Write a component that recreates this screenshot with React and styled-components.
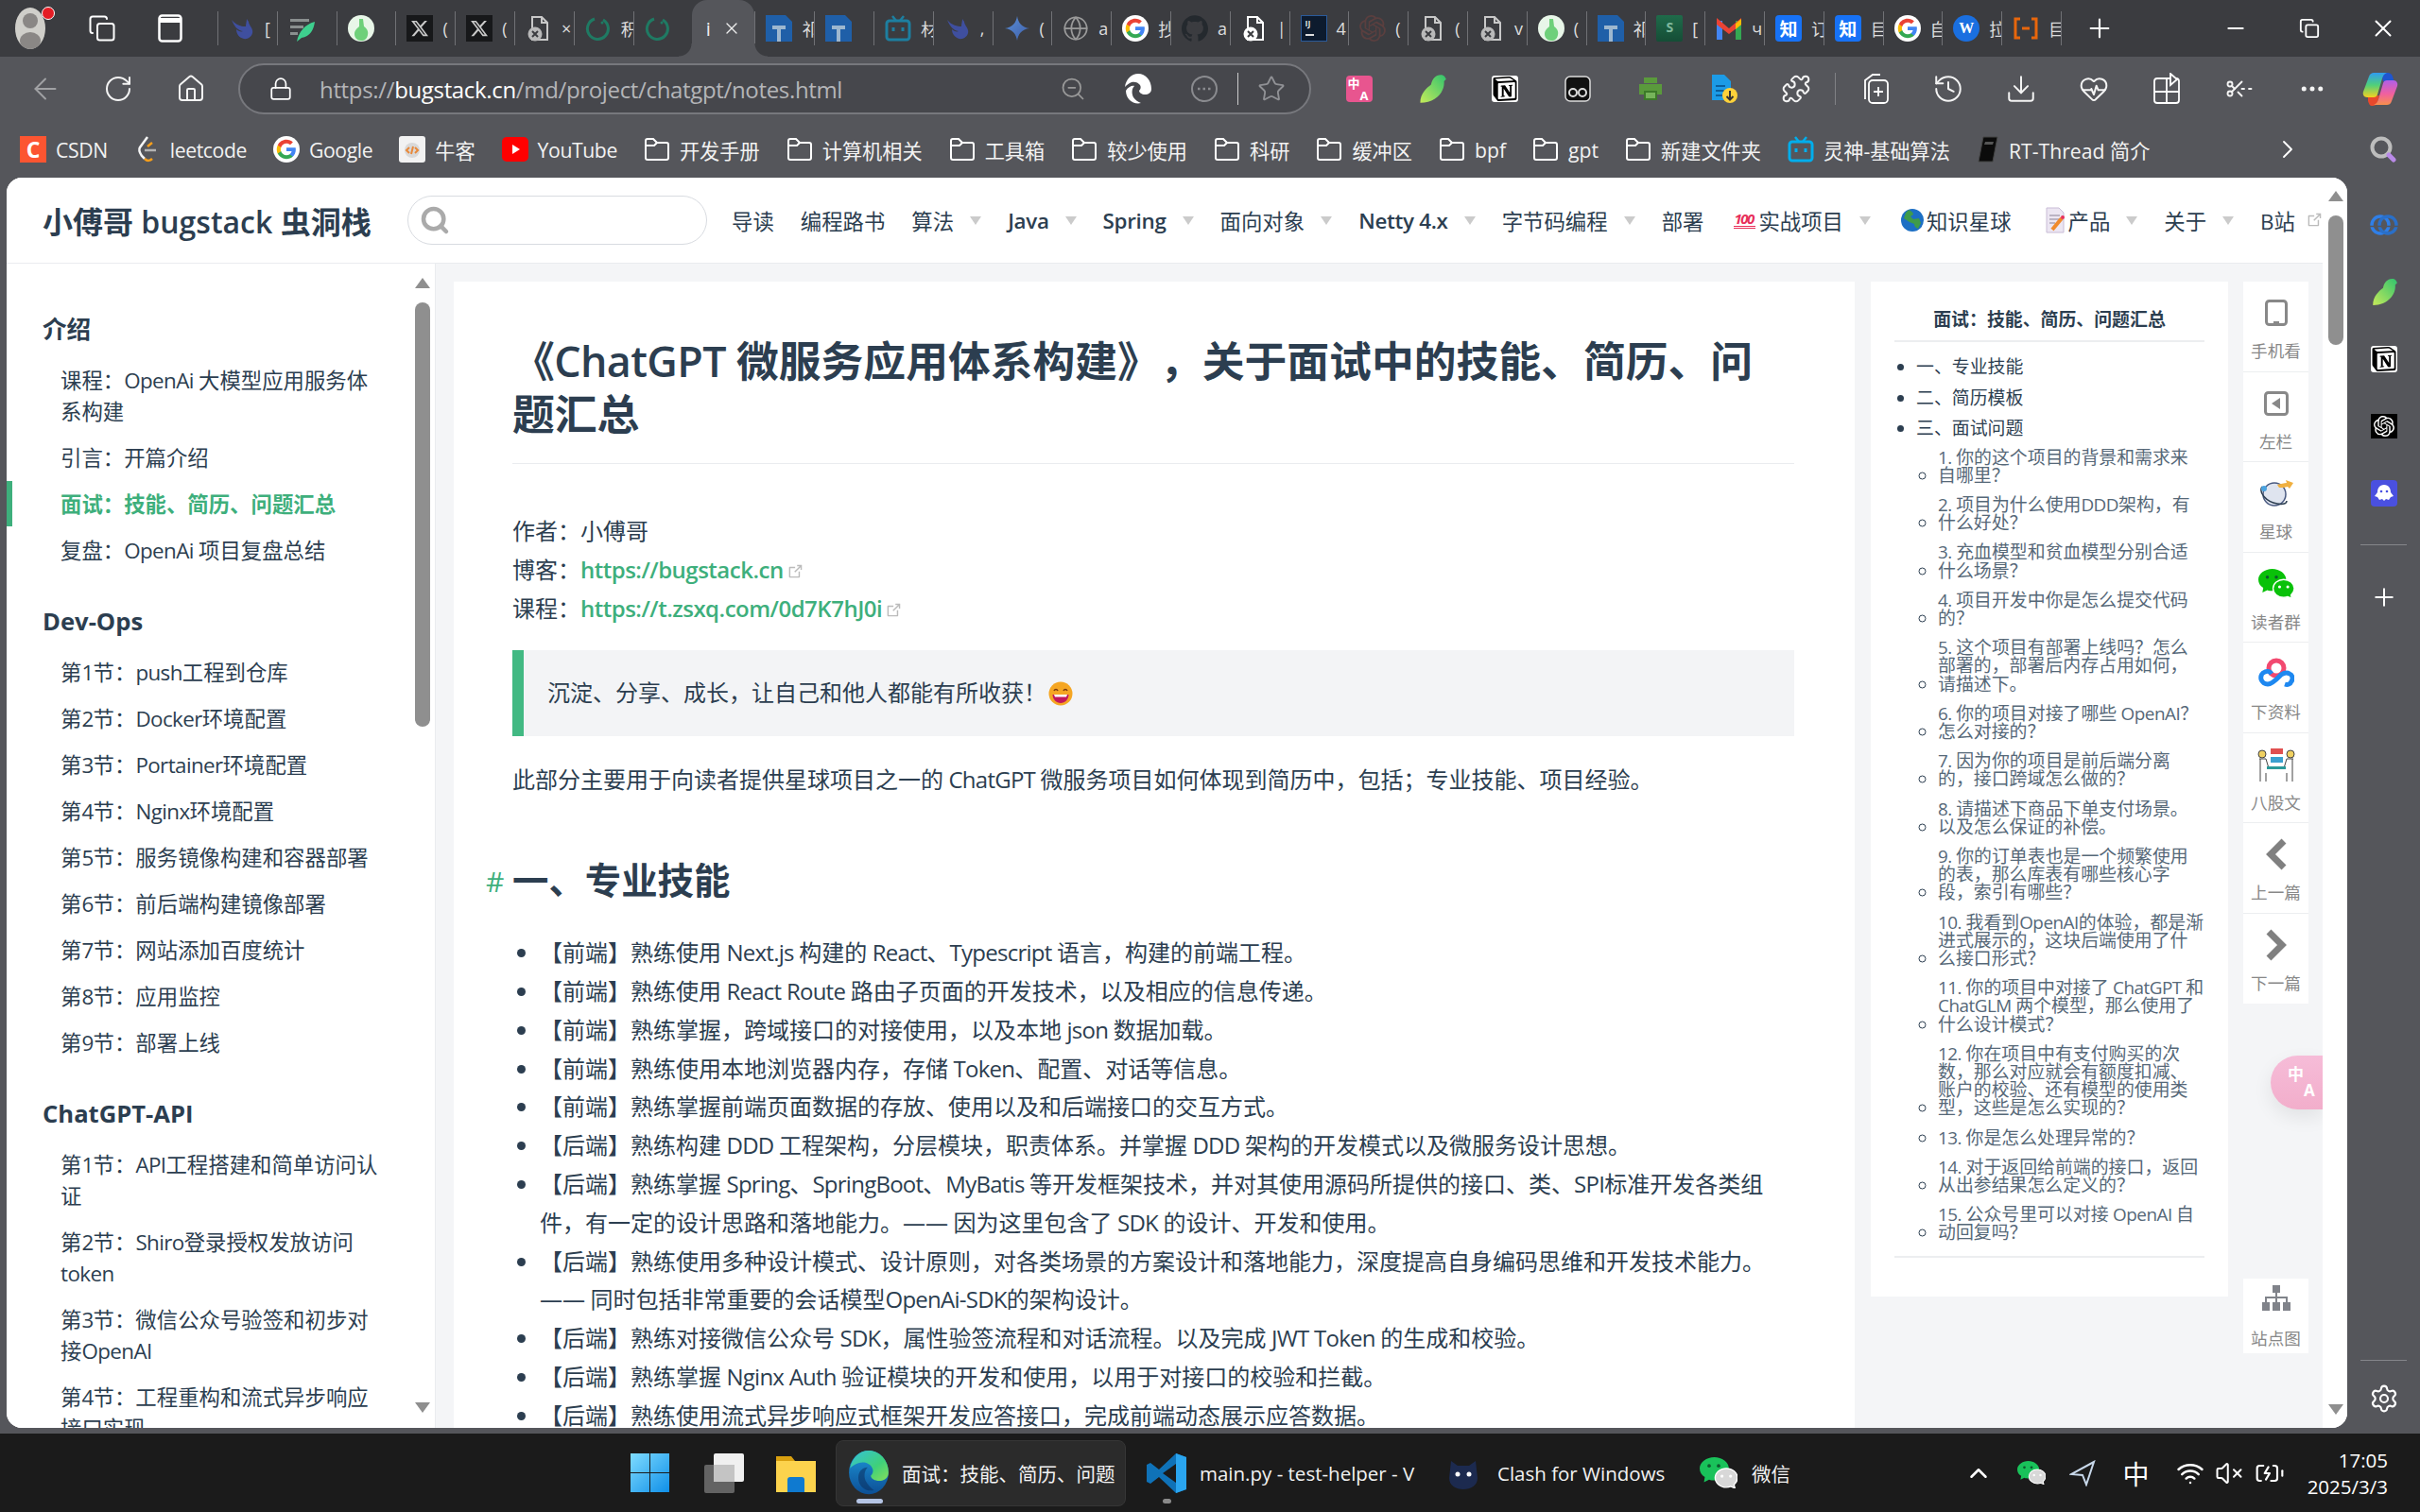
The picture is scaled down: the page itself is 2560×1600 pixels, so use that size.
import React from 'react';
import styled, { createGlobalStyle } from 'styled-components';
import { ArrowLeft, RotateCw, Home, Lock, ZoomOut, Star, Puzzle, History, Download, MoreHorizontal, Plus, Minus, X, Search, Settings, ChevronUp, ChevronRight, Wifi, VolumeX, BatteryCharging, Copy, Globe, ScissorsLineDashed, HeartPulse } from 'lucide-react';
import { SiNotion, SiOpenai, SiGithub } from 'react-icons/si';
import { FaXTwitter } from 'react-icons/fa6';

const sans = `"Open Sans","Noto Sans CJK SC",sans-serif`;
const ink = '#2c3e50';
const green = '#3eaf7c';

/* Chinese copy uses full-width punctuation throughout. */
const fw = s => s
  .replace(/:/g, '\uFF1A')
  .replace(/,/g, '\uFF0C')
  .replace(/;/g, '\uFF1B')
  .replace(/\?/g, '\uFF1F')
  .replace(/!/g, '\uFF01');

const Global = createGlobalStyle`
  html, body { margin: 0; width: 2560px; height: 1600px; overflow: hidden; background: #55565b; }
  body { font-family: ${sans}; color: ${ink}; text-spacing-trim: space-all; }
  * { box-sizing: border-box; }
`;

/* Latin runs inside Chinese copy are set a little tighter. */
const Lat = styled.span`letter-spacing: ${p => p.$ls}px;`;
const Mixed = ({ text, ls = -.75 }) => fw(text).split(/([A-Za-z0-9 .\-]+)/).map((part, i) => (
  i % 2 ? <Lat key={i} $ls={ls}>{part}</Lat> : part
));

const Ic = styled.svg`flex: none; display: block;`;

/* ---------- brand drawings ---------- */
const GoogleG = ({ s = 28 }) => (
  <Ic width={s} height={s} viewBox="0 0 24 24">
    <circle cx="12" cy="12" r="12" fill="#fff" />
    <g transform="translate(2.4 2.4) scale(.8)">
      <path fill="#4285F4" d="M22.56 12.25c0-.78-.07-1.53-.2-2.25H12v4.26h5.92c-.26 1.37-1.04 2.53-2.21 3.31v2.77h3.57c2.08-1.92 3.28-4.74 3.28-8.09z" />
      <path fill="#34A853" d="M12 23c2.97 0 5.46-.98 7.28-2.66l-3.57-2.77c-.98.66-2.23 1.06-3.71 1.06-2.86 0-5.29-1.93-6.16-4.53H2.18v2.84C3.99 20.53 7.7 23 12 23z" />
      <path fill="#FBBC05" d="M5.84 14.09c-.22-.66-.35-1.36-.35-2.09s.13-1.43.35-2.09V7.07H2.18C1.43 8.55 1 10.22 1 12s.43 3.45 1.18 4.93l3.66-2.84z" />
      <path fill="#EA4335" d="M12 5.38c1.62 0 3.06.56 4.21 1.64l3.15-3.15C17.45 2.09 14.97 1 12 1 7.7 1 3.99 3.47 2.18 7.07l3.66 2.84c.87-2.6 3.3-4.53 6.16-4.53z" />
    </g>
  </Ic>
);
const Whale = () => (
  <Ic width="28" height="28" viewBox="0 0 28 28">
    <path fill="#3f4f9f" d="M3 5c3 7 6 11 12 12-2 1-5 0-7-2 0 6 5 11 11 10 4-1 7-5 6-9-1-4-4-6-4-9l-2-3c0 3-1 5-1 8C14 12 8 11 3 5z" />
  </Ic>
);
const Feather = () => (
  <Ic width="28" height="28" viewBox="0 0 28 28">
    <path fill="#8a8f8f" d="M2 4h20v3H2zM2 11h14v3H2zM2 18h8v3H2z" />
    <path fill="#3ecf8e" d="M9 28c2-10 8-18 19-21-1 8-5 16-14 17z" />
  </Ic>
);
const Bottle = ({ s = 28 }) => (
  <Ic width={s} height={s} viewBox="0 0 28 28">
    <circle cx="14" cy="14" r="14" fill="#e8f6e8" />
    <path fill="#6ed07a" d="M12 4h4l1 8c3 2 5 5 4 9-1 4-3 6-7 6s-7-3-7-7c0-4 3-6 5-8z" />
  </Ic>
);
const TileBlack = styled.span`width: 28px; height: 28px; background: #17181a; display: flex; align-items: center; justify-content: center; flex: none;`;
const XLogo = () => (
  <TileBlack><FaXTwitter size={20} color="#c9c9c9" /></TileBlack>
);
const DocX = () => (
  <Ic width="28" height="28" viewBox="0 0 28 28">
    <path fill="none" stroke="#c8c8c8" strokeWidth="2" d="M7 2h10l6 6v18H7z" />
    <path fill="none" stroke="#c8c8c8" strokeWidth="2" d="M17 2v6h6" />
    <circle cx="10" cy="20" r="7.500" fill="#b9b9b9" />
    <path stroke="#3b3c40" strokeWidth="2" d="M7 17l6 6M13 17l-6 6" />
  </Ic>
);
const DocXW = () => (
  <Ic width="28" height="28" viewBox="0 0 28 28">
    <path fill="none" stroke="#fff" strokeWidth="2" d="M7 2h10l6 6v18H7z" />
    <path fill="none" stroke="#fff" strokeWidth="2" d="M17 2v6h6" />
    <circle cx="10" cy="20" r="7.500" fill="#fff" />
    <path stroke="#3b3c40" strokeWidth="2" d="M7 17l6 6M13 17l-6 6" />
  </Ic>
);
const Loader = () => (
  <Ic width="28" height="28" viewBox="0 0 28 28">
    <path fill="none" stroke="#1f7a63" strokeWidth="3" d="M10 4a11 11 0 1 0 9 1" />
    <circle cx="18" cy="8" r="1.500" fill="#1f7a63" />
  </Ic>
);
const TDoc = () => (
  <Ic width="28" height="28" viewBox="0 0 28 28">
    <path fill="#1f5fa8" d="M0 0h21l7 7v21H0z" />
    <path fill="#9db7cf" d="M7 11h14v4h-5v13h-4V15H7z" />
  </Ic>
);
const TV = ({ c = '#1d7fa0' }) => (
  <Ic width="28" height="28" viewBox="0 0 28 28">
    <path stroke={c} strokeWidth="2.500" d="M8 1l4 5M20 1l-4 5" />
    <rect x="2" y="6" width="24" height="20" rx="3" fill="none" stroke={c} strokeWidth="3" />
    <path stroke={c} strokeWidth="3" d="M9 13v4M19 13v4" />
  </Ic>
);
const Spark = () => (
  <Ic width="28" height="28" viewBox="0 0 28 28">
    <defs><linearGradient id="sp" x1="0" y1="0" x2="1" y2="1"><stop stopColor="#5a8fd8" /><stop offset="1" stopColor="#3f5fa8" /></linearGradient></defs>
    <path fill="url(#sp)" d="M14 1c1 7 5 12 13 13-8 1-12 6-13 13-1-7-5-12-13-13 8-1 12-6 13-13z" />
  </Ic>
);
const IJTile = styled.span`
  width: 28px; height: 28px; background: #0d1b2e; border: 1px solid #2a5a9a; color: #ddd; font: 700 9px ${sans};
  padding: 3px 0 0 4px; flex: none; display: block; line-height: 10px;
  i { display: block; width: 9px; height: 2px; background: #ddd; margin-top: 6px; }
`;
const IJ = () => (
  <IJTile>IJ<i /></IJTile>
);
const OAIdark = () => <SiOpenai size={28} color="#5a3f3f" />;
const SheetTile = styled.span`
  width: 28px; height: 28px; background: linear-gradient(#1f6b4a, #154d36); color: #7fb89c; font: 700 14px/26px ${sans}; text-align: center; flex: none; border-radius: 2px;
`;
const SDoc = () => (
  <SheetTile>S</SheetTile>
);
const Gmail = () => (
  <Ic width="28" height="28" viewBox="0 0 28 28">
    <path fill="#4285F4" d="M1 6h6v20H1z" /><path fill="#34A853" d="M21 6h6v20h-6z" />
    <path fill="#EA4335" d="M1 3l13 11L27 3v7L14 20 1 10z" />
    <path fill="#FBBC05" d="M21 9l6-5v6l-6 5z" />
  </Ic>
);
const ZhiTile = styled.span`
  width: 28px; height: 28px; background: #1772f6; color: #fff; font: 700 19px/27px "Noto Sans CJK SC", sans-serif; text-align: center; border-radius: 4px; flex: none; overflow: hidden;
`;
const WTile = styled.span`
  width: 28px; height: 28px; background: #1a6fe0; color: #fff; font: 700 16px/28px "Liberation Serif", serif; text-align: center; border-radius: 50%; flex: none;
`;
const Bracket = () => (
  <Ic width="28" height="28" viewBox="0 0 28 28">
    <path fill="none" stroke="#e8660c" strokeWidth="3" d="M8 4H3v20h5M20 4h5v20h-5M10 14h8" />
  </Ic>
);
const AvatarBox = styled.span`position: relative; display: block; width: 44px; height: 46px; flex: none;`;
const RedDot = styled.i`position: absolute; right: 0; top: 0; width: 14px; height: 14px; border-radius: 50%; background: #e41c24; border: 1px solid #fff;`;
const Avatar = () => (
  <AvatarBox>
    <Ic width="36" height="46" viewBox="0 0 36 46">
      <ellipse cx="18" cy="23" rx="16" ry="22" fill="#d0cfca" />
      <circle cx="18" cy="15" r="8" fill="#8a8785" />
      <ellipse cx="18" cy="36" rx="11" ry="9" fill="#8a8785" />
    </Ic>
    <RedDot />
  </AvatarBox>
);
const Bird = ({ s = 28 }) => (
  <Ic width={s} height={s} viewBox="0 0 28 28">
    <defs><linearGradient id="bd" x1="0" y1="1" x2="1" y2="0"><stop stopColor="#c6ea5a" /><stop offset="1" stopColor="#2fc36e" /></linearGradient></defs>
    <path fill="url(#bd)" d="M3 27C3 18 9 13 13 10 14 5 17 1 22 1c3 0 4 2 5 4l-2 2c1 9-7 20-22 20z" />
  </Ic>
);
const NotionTile = styled.span`
  width: 28px; height: 28px; background: #fff; color: #000; display: flex; align-items: center; justify-content: center; flex: none; border-radius: 3px;
`;
const TransTile = styled.span`
  width: ${p => p.$s || 28}px; height: ${p => p.$s || 28}px; background: ${p => p.$bare ? 'transparent' : '#e8558f'}; border-radius: 4px; color: #fff; font: 700 ${p => p.$f || 13}px/1 ${sans}; flex: none;
  display: grid; grid-template: 1fr 1fr / 1fr 1fr; padding: 2px;
  span:first-child { grid-area: 1 / 1; } span:last-child { grid-area: 2 / 2; }
`;
const Tape = () => (
  <Ic width="28" height="28" viewBox="0 0 28 28">
    <rect x="1" y="1" width="26" height="26" rx="5" fill="#111" stroke="#ddd" strokeWidth="1.500" />
    <circle cx="9" cy="18" r="4" fill="none" stroke="#ddd" strokeWidth="2" />
    <circle cx="19" cy="18" r="4" fill="none" stroke="#ddd" strokeWidth="2" />
  </Ic>
);
const Printer = () => (
  <Ic width="28" height="28" viewBox="0 0 28 28">
    <path fill="#5a9a3c" d="M7 2h14v6H7zM2 9h24v11H2z" />
    <path fill="#3c7a28" d="M7 16h14v10H7z" /><path fill="#76b45a" d="M9 18h10v6H9z" />
  </Ic>
);
const DocDl = () => (
  <Ic width="32" height="32" viewBox="0 0 32 32">
    <path fill="#1c9be6" d="M4 1h13l7 7v20H4z" />
    <path stroke="#0a5f9e" strokeWidth="2" d="M8 13h10M8 18h10M8 23h7" />
    <circle cx="23" cy="23" r="8" fill="#fdd23a" />
    <path stroke="#333" strokeWidth="2" fill="none" d="M23 18v9M19.500 24l3.500 3.500 3.500-3.500" />
  </Ic>
);
const Copilot = () => (
  <Ic width="38" height="36" viewBox="0 0 38 36">
    <defs>
      <linearGradient id="c2" x1="0" y1="0" x2="0" y2="1"><stop stopColor="#2f9cf0" /><stop offset=".5" stopColor="#4fd07a" /><stop offset="1" stopColor="#f4d020" /></linearGradient>
      <linearGradient id="c3" x1="0" y1="0" x2="0" y2="1"><stop stopColor="#b05fe8" /><stop offset=".55" stopColor="#f0609f" /><stop offset="1" stopColor="#f8904c" /></linearGradient>
    </defs>
    <path fill="#1f55d0" d="M20 1h7c2 0 4 1 5 4l2 6-12-1z" />
    <path fill="#e8482c" d="M6 26l12-1-2 7c-1 3-3 4-5 4H10c-2 0-3-2-4-5z" />
    <path fill="url(#c2)" d="M12 1h14c-3 1-4 3-5 6l-5 17c-.5 2-2 3-4 3H5c-3 0-5-3-4-6L7 5c1-3 3-4 5-4z" />
    <path fill="url(#c3)" d="M26 35H12c3-1 4-3 5-6l5-17c.5-2 2-3 4-3h7c3 0 5 3 4 6l-6 16c-1 3-3 4-5 4z" />
  </Ic>
);
const GhostTile = styled.span`width: 28px; height: 28px; background: #4a50e0; border-radius: 4px; display: flex; align-items: center; justify-content: center;`;
const Ghost = () => (
  <GhostTile>
    <Ic width="22" height="22" viewBox="0 0 22 22">
      <path fill="#fff" d="M11 2c5 0 7 4 7 8l3 4-3 1-2 3-3-1-2 2-2-2-3 1-2-3-3-1 3-4c0-4 2-8 7-8z" />
      <circle cx="8" cy="9" r="1.300" fill="#4a50e0" /><circle cx="14" cy="9" r="1.300" fill="#4a50e0" />
    </Ic>
  </GhostTile>
);
const OpenTile = styled.span`width: 28px; height: 26px; background: #000; display: flex; align-items: center; justify-content: center;`;
const RailRings = () => (
  <Ic width="30" height="24" viewBox="0 0 30 24" fill="none" strokeWidth="3.500">
    <circle cx="11" cy="12" r="9" stroke="#2f7fe8" />
    <circle cx="19" cy="12" r="9" stroke="#2a6fc8" />
    <path stroke="#55565b" strokeWidth="1.500" d="M0 13.500h30" />
  </Ic>
);
const RailSearch = () => (
  <Ic width="28" height="28" viewBox="0 0 28 28" fill="none">
    <circle cx="12" cy="12" r="9.500" stroke="#bdbdbd" strokeWidth="4" />
    <path stroke="#b98ae8" strokeWidth="5" strokeLinecap="round" d="M20 20l5 5" />
  </Ic>
);

const Edge = ({ s = 44 }) => (
  <Ic width={s} height={s * 1.1} viewBox="0 0 40 44">
    <defs>
      <linearGradient id="e1" x1="0" y1="0" x2="1" y2="1"><stop stopColor="#35c1d8" /><stop offset=".6" stopColor="#3fd07a" /><stop offset="1" stopColor="#86e05a" /></linearGradient>
      <linearGradient id="e2" x1="0" y1="0" x2="0" y2="1"><stop stopColor="#1e96d8" /><stop offset="1" stopColor="#0c4f96" /></linearGradient>
    </defs>
    <ellipse cx="20" cy="22" rx="19" ry="21" fill="url(#e2)" />
    <path fill="url(#e1)" d="M2 18C4 8 11 1 20 1c10 0 19 9 19 21 0 5-4 8-9 8-4 0-8-2-8-5 2-2 3-5 1-8-2-4-8-6-13-4-3 1-6 3-8 5z" />
    <path fill="#0b2f5e" d="M25 39c-7 2-15-3-15-12 0-6 4-10 9-10-3 3-4 8-2 13 2 4 5 7 8 9z" opacity=".55" />
  </Ic>
);
const EdgeMono = () => (
  <Ic width="30" height="34" viewBox="0 0 30 34">
    <path fill="#fff" d="M1 15C2 7 8 1 15 1c8 0 14 7 14 16 0 4-3 6-7 6-3 0-6-2-6-4 2-2 2-4 1-6-2-3-6-4-9-3-3 1-5 3-7 5z" />
    <path fill="#fff" d="M18 32C10 34 2 28 2 19c2-4 7-6 9-5-3 3-3 8-1 12 2 3 5 5 8 6z" />
  </Ic>
);
const WinLogo = () => (
  <Ic width="41" height="41" viewBox="0 0 41 41">
    <defs><linearGradient id="w" x1="0" y1="0" x2="1" y2="1"><stop stopColor="#7fdcff" /><stop offset="1" stopColor="#0f8fe8" /></linearGradient></defs>
    <path fill="url(#w)" d="M0 0h20v20H0zM21 0h20v20H21zM0 21h20v20H0zM21 21h20v20H21z" />
  </Ic>
);
const TaskView = () => (
  <Ic width="42" height="42" viewBox="0 0 42 42">
    <rect x="10" y="0" width="32" height="30" rx="2" fill="#f0f0f0" />
    <rect x="0" y="12" width="32" height="30" rx="2" fill="#6b6b6b" opacity=".9" />
    <rect x="10" y="12" width="22" height="18" fill="#c4c4c4" />
  </Ic>
);
const Explorer = () => (
  <Ic width="42" height="40" viewBox="0 0 42 40">
    <path fill="#d9a00f" d="M0 2h16l4 5h22v8H0z" />
    <path fill="#fcd34d" d="M0 7h42v33H0z" />
    <path fill="#0f7ad0" d="M15 24h12c2 0 3 1 3 3v13H12V27c0-2 1-3 3-3z" />
  </Ic>
);
const VSCode = () => (
  <Ic width="44" height="44" viewBox="0 0 44 44">
    <path fill="#0f72b8" d="M32 1 14 18 5 11 1 13v18l4 2 9-7 18 17 11-4V5zM32 12v20L18 22z" fillRule="evenodd" />
    <path fill="#2aa5ef" d="M32 1l11 4v34l-11 4z" />
  </Ic>
);
const Clash = () => (
  <Ic width="38" height="38" viewBox="0 0 38 38">
    <path fill="#1c2a4f" d="M6 6l7 5h12l7-5 2 18c0 8-7 12-15 12S4 32 4 24z" />
    <circle cx="13" cy="20" r="2.500" fill="#fff" /><circle cx="25" cy="20" r="2.500" fill="#fff" />
  </Ic>
);
const WeChat = ({ w = 44, a = '#19c25a', b = '#19c25a' }) => (
  <Ic width={w} height={w * .82} viewBox="0 0 44 36">
    <path fill={a} d="M17 0c9 0 17 6 17 13s-8 14-17 14c-2 0-4 0-6-1l-6 3 1-6C2 21 0 17 0 13 0 6 8 0 17 0z" />
    <path fill={b} stroke="#fff" strokeWidth="1.500" d="M31 13c7 0 13 5 13 11 0 3-2 6-4 8l1 4-5-2c-2 1-3 1-5 1-7 0-13-5-13-11s6-11 13-11z" />
    <circle cx="11" cy="10" r="2" fill="#0d5a2e" /><circle cx="22" cy="10" r="2" fill="#0d5a2e" />
    <circle cx="26" cy="22" r="1.800" fill="#fff" /><circle cx="36" cy="22" r="1.800" fill="#fff" />
  </Ic>
);
const BaiduCloud = () => (
  <Ic width="38" height="34" viewBox="0 0 38 34">
    <circle cx="19" cy="11" r="8" fill="none" stroke="#f2496f" strokeWidth="5" />
    <path fill="none" stroke="#1e88f0" strokeWidth="5" d="M14 17c-2-3-5-3-7-2-3 1-5 4-4 8 1 3 4 5 7 5 5 0 10-6 14-10 3-2 6-3 9-1 3 1 4 5 2 8-1 3-4 4-7 3" />
  </Ic>
);
const Planet = () => (
  <Ic width="38" height="34" viewBox="0 0 38 34">
    <circle cx="17" cy="18" r="12" fill="#dfe4ef" stroke="#4a5a80" strokeWidth="1.500" />
    <path fill="none" stroke="#2c3e50" strokeWidth="1.500" d="M4 10C0 16 8 26 20 28c6 1 10 0 10-3" />
    <circle cx="6" cy="12" r="3" fill="#4aa3e0" />
    <path fill="#f0b040" d="M20 8c4-1 7-2 10-2l-1-3 8 3-4 6-2-2c-3 1-6 1-9 1z" />
  </Ic>
);
const Interview = () => (
  <Ic width="40" height="36" viewBox="0 0 40 36" fill="none" stroke="#444" strokeWidth="1">
    <rect x="14" y="1" width="13" height="6" fill="#e05050" stroke="none" />
    <rect x="14" y="10" width="13" height="6" fill="#3aa0d0" stroke="none" />
    <circle cx="5" cy="7" r="4" fill="#f0d060" /><circle cx="35" cy="7" r="4" fill="#f0d060" />
    <path d="M2 12h7l3 10h5M38 12h-7l-3 10h-5M3 12v24M37 12v24M9 27v9M31 27v9" />
    <rect x="10" y="20" width="20" height="3" fill="#2a9a9a" stroke="none" />
  </Ic>
);
const Tablet = () => (
  <Ic width="24" height="28" viewBox="0 0 24 28">
    <rect x="1.500" y="1.500" width="21" height="25" rx="3" fill="#fff" stroke="#888" strokeWidth="3" />
    <rect x="9" y="23" width="6" height="2" fill="#888" />
  </Ic>
);
const LeftBar = () => (
  <Ic width="26" height="26" viewBox="0 0 26 26">
    <rect x="1.500" y="1.500" width="23" height="23" rx="3" fill="#fff" stroke="#888" strokeWidth="3" />
    <path fill="#888" d="M17 7v12L8 13z" />
  </Ic>
);
const Thick = ({ left }) => (
  <Ic width="24" height="34" viewBox="0 0 24 34">
    <path fill="none" stroke="#808080" strokeWidth="7" d={left ? 'M20 3 6 17l14 14' : 'M4 3l14 14L4 31'} />
  </Ic>
);
const SiteMap = () => (
  <Ic width="30" height="28" viewBox="0 0 30 28">
    <path fill="#80838a" d="M11 0h8v8h-8zM0 18h8v9H0zM11 18h8v9h-8zM22 18h8v9h-8z" />
    <path fill="none" stroke="#80838a" strokeWidth="2" d="M15 8v10M4 18v-5h22v5" />
  </Ic>
);
const EmojiSvg = styled.svg`display: inline-block; vertical-align: -5px; margin-left: 2px;`;
const Smile = () => (
  <EmojiSvg width="26" height="26" viewBox="0 0 26 26">
    <circle cx="13" cy="13" r="12.500" fill="#f5a623" />
    <path fill="none" stroke="#7a3b10" strokeWidth="1.600" d="M6 10c1-2 3-2 4 0M16 10c1-2 3-2 4 0" />
    <path fill="#c2185b" d="M4.500 14h17c0 5-4 9-8.500 9s-8.500-4-8.500-9z" />
    <path fill="#fff" d="M6 14h14l-1 2.500H7z" />
  </EmojiSvg>
);
const OutSvg = styled.svg`display: inline-block; margin-left: ${p => p.$ml || 3}px; vertical-align: -2px; flex: none;`;
const Outbound = ({ s = 18, ml = 3 }) => (
  <OutSvg $ml={ml} width={s} height={s} viewBox="0 0 100 100">
    <path fill="#bbb" d="M18.800 85.100h56c2.200 0 4-1.800 4-4v-32h-8v28h-48v-48h28v-8h-32c-2.200 0-4 1.800-4 4v56c0 2.200 1.800 4 4 4z" />
    <path fill="#bbb" d="M45.700 48.700l5.700 5.700 31-31v15h8V10h-28v8h14.300z" />
  </OutSvg>
);

/* ---------- tab strip ---------- */
const Strip = styled.div`height: 60px; background: #3b3c40; display: flex; align-items: center; color: #ddd; flex: none;`;
const Lead = styled.span`width: 72px; height: 60px; display: flex; align-items: center; justify-content: center; flex: none; color: #fff;`;
const Tab = styled.div`
  width: 62.8px; height: 36px; border-left: 1px solid #707175; padding-left: 11px; display: flex; align-items: center; gap: 10px;
  overflow: hidden; font-size: 18px; color: #ddd; flex: none; white-space: nowrap;
`;
const ActiveTab = styled.div`
  width: 66px; height: 60px; background: #55565b; border-radius: 16px 16px 0 0; display: flex; align-items: center; justify-content: center; gap: 12px;
  color: #eee; font-size: 20px; flex: none; position: relative;
  &:before, &:after { content: ""; position: absolute; bottom: 0; width: 14px; height: 14px; }
  &:before { left: -14px; background: radial-gradient(circle at 0 0, #3b3c40 13px, #55565b 14px); }
  &:after { right: -14px; background: radial-gradient(circle at 100% 0, #3b3c40 13px, #55565b 14px); }
`;
const WinCtl = styled.span`display: flex; align-items: center; justify-content: center; width: 78px; height: 60px; flex: none; color: #fff;`;
const Spacer = styled.span`width: ${p => p.$w}px; flex: none;`;
const TabEnd = styled.span`height: 36px; border-left: 1px solid #707175; margin-right: 24px; flex: none;`;
const WinSpace = styled.span`flex: 1;`;

const tabsA = [[<Whale />, '['], [<Feather />, ''], [<Bottle />, ''], [<XLogo />, '('], [<XLogo />, '('], [<DocX />, '×'], [<Loader />, '积'], [<Loader />, '']];
const tabsB = [[<TDoc />, '祁'], [<TDoc />, ''], [<TV />, '材'], [<Whale />, ','], [<Spark />, '('], [<Globe size={28} color="#9a9a9a" strokeWidth={1.5} />, 'a'], [<GoogleG />, '抄'], [<SiGithub size={28} color="#24292e" />, 'a'],
  [<DocXW />, '|'], [<IJ />, '4'], [<OAIdark />, '('], [<DocX />, '('], [<DocX />, 'v'], [<Bottle />, '('], [<TDoc />, '祁'], [<SDoc />, '['], [<Gmail />, 'ч'], [<ZhiTile>知</ZhiTile>, '订'], [<ZhiTile>知</ZhiTile>, '目'], [<GoogleG />, '自'], [<WTile>W</WTile>, '拉'], [<Bracket />, '目']];

const TabIco = () => (
  <Ic width="26" height="30" viewBox="0 0 26 30"><rect x="1.500" y="1.500" width="23" height="27" rx="3" fill="none" stroke="#fff" strokeWidth="2.500" /><path fill="#fff" d="M1.500 4h23v5h-23z" /></Ic>
);

const TabStrip = () => (
  <Strip>
    <Lead><Avatar /></Lead>
    <Lead><Copy size={30} strokeWidth={1.6} /></Lead>
    <Lead><TabIco /></Lead>
    <Spacer $w={14} />
    {tabsA.map(([i, t], k) => <Tab key={k}>{i}<span>{t}</span></Tab>)}
    <ActiveTab><span>i</span><X size={20} strokeWidth={1.6} /></ActiveTab>
    {tabsB.map(([i, t], k) => <Tab key={k}>{i}<span>{t}</span></Tab>)}
    <TabEnd />
    <Plus size={32} color="#fff" strokeWidth={1.6} />
    <WinSpace />
    <WinCtl><Minus size={26} strokeWidth={2} /></WinCtl>
    <WinCtl><Copy size={22} strokeWidth={2} /></WinCtl>
    <WinCtl><X size={30} strokeWidth={1.6} /></WinCtl>
  </Strip>
);

/* ---------- toolbar ---------- */
const Bar = styled.div`height: 68px; background: #55565b; display: flex; align-items: center; padding-left: 9px; color: #fff; flex: none;`;
const Slot = styled.span`width: ${p => p.$w || 77}px; display: flex; align-items: center; justify-content: center; flex: none; color: #f4f4f4;`;
const Omni = styled.div`
  width: 1135px; height: 54px; margin: 0 12px; border: 2px solid #77787d; border-radius: 27px; background: #46474c; display: flex; align-items: center; padding: 0 25px 0 30px; flex: none;
`;
const Url = styled.div`flex: 1; margin-left: 28px; font-size: 24px; color: #b4b5b8; letter-spacing: -.34px; white-space: nowrap; b { font-weight: 400; color: #fff; }`;
const OmniIcons = styled.div`display: flex; align-items: center; gap: 40px;`;
const VSep = styled.span`width: 1px; height: ${p => p.$h || 34}px; background: ${p => p.$c || '#ccc'}; flex: none; margin: 0 ${p => p.$m || 0}px;`;
const MoreCircle = () => (
  <Ic width="30" height="30" viewBox="0 0 30 30"><circle cx="15" cy="15" r="13" fill="none" stroke="#8a8b8f" strokeWidth="2" /><path stroke="#8a8b8f" strokeWidth="2.500" strokeDasharray="2.500 3" d="M8 15h14" /></Ic>
);
const TabPlus = () => (
  <Ic width="32" height="34" viewBox="0 0 32 34" fill="none" stroke="#fff" strokeWidth="1.800"><path d="M5 28V8l8-6h8" /><rect x="9" y="8" width="20" height="24" rx="4" /><path d="M19 15v10M14 20h10" /></Ic>
);
const SplitIco = () => (
  <Ic width="32" height="34" viewBox="0 0 32 34" fill="none" stroke="#fff" strokeWidth="1.800"><rect x="3" y="6" width="26" height="26" rx="3" /><path d="M16 6v26M3 20h26" /><path d="M20 1l7 6-7 6z" fill="#55565b" /></Ic>
);

const Toolbar = () => (
  <Bar>
    <Slot><ArrowLeft size={36} color="#a0a1a4" strokeWidth={1.3} /></Slot>
    <Slot><RotateCw size={32} strokeWidth={1.5} /></Slot>
    <Slot><Home size={32} strokeWidth={1.5} /></Slot>
    <Omni>
      <Lock size={26} color="#fff" strokeWidth={1.6} />
      <Url>https://<b>bugstack.cn</b>/md/project/chatgpt/notes.html</Url>
      <OmniIcons>
        <ZoomOut size={28} color="#999" strokeWidth={1.5} />
        <EdgeMono />
        <MoreCircle />
      </OmniIcons>
      <VSep $m={20} />
      <Star size={30} color="#909195" strokeWidth={1.5} />
    </Omni>
    <Slot><TransTile><span>中</span><span>A</span></TransTile></Slot>
    <Slot><Bird s={32} /></Slot>
    <Slot><NotionTile><SiNotion size={26} /></NotionTile></Slot>
    <Slot><Tape /></Slot>
    <Slot><Printer /></Slot>
    <Slot><DocDl /></Slot>
    <Slot><Puzzle size={32} strokeWidth={1.5} /></Slot>
    <VSep $c="#808185" $m={3} />
    <Slot><TabPlus /></Slot>
    <Slot><History size={34} strokeWidth={1.4} /></Slot>
    <Slot><Download size={34} strokeWidth={1.4} /></Slot>
    <Slot><HeartPulse size={32} strokeWidth={1.5} /></Slot>
    <Slot><SplitIco /></Slot>
    <Slot><ScissorsLineDashed size={30} strokeWidth={1.5} /></Slot>
    <Slot><MoreHorizontal size={30} strokeWidth={2} /></Slot>
    <Slot $w={67}><Copilot /></Slot>
  </Bar>
);

/* ---------- bookmarks ---------- */
const Marks = styled.div`height: 60px; background: #55565b; display: flex; align-items: center; padding-left: 21px; gap: 28px; color: #f2f2f2; font-size: 21.200px; flex: none; white-space: nowrap;`;
const Mark = styled.span`display: flex; align-items: center; gap: 10px; flex: none; letter-spacing: ${p => p.$tight ? '-.4px' : '0'};`;
const CsdnTile = styled.span`width: 28px; height: 28px; background: #fc5531; color: #fff; font: 700 23px/28px ${sans}; text-align: center;`;
const Leet = () => (
  <Ic width="28" height="28" viewBox="0 0 28 28" fill="none" strokeWidth="2.500"><path stroke="#f5f5f5" d="M14 1 6 12c-2 3 0 6 2 9l3 3" /><path stroke="#f89f1b" d="M11 24c3 3 6 2 8 0M19 7l-5 4" /><path stroke="#b3b3b3" d="M11 15h12" /></Ic>
);
const Nk = () => (
  <Ic width="28" height="28" viewBox="0 0 28 28"><rect width="28" height="28" rx="3" fill="#f2f2f2" /><circle cx="14" cy="15" r="8" fill="#d9d9d9" /><path stroke="#e8893a" strokeWidth="2" fill="none" d="M11 12l-3 3 3 3M17 12l3 3-3 3M15 11l-2 8" /></Ic>
);
const Yt = () => (
  <Ic width="28" height="28" viewBox="0 0 28 28"><rect y="1" width="28" height="26" rx="5" fill="#f00" /><path fill="#fff" d="M11 9l8 5-8 5z" /></Ic>
);
const Fold = () => (
  <Ic width="28" height="28" viewBox="0 0 28 28" fill="none" stroke="#fff" strokeWidth="2"><path d="M2 5c0-1 1-2 2-2h6l4 4h10c1 0 2 1 2 2v14c0 1-1 2-2 2H4c-1 0-2-1-2-2z" /><path d="M14 7l-3 3H2" /></Ic>
);
const RT = () => (
  <Ic width="24" height="28" viewBox="0 0 24 28"><path fill="#0b0b0b" stroke="#444" d="M7 1h15l-5 26H2z" /><path fill="#555" d="M9 6h9l-1 3H8z" /></Ic>
);
const MarkEnd = styled.span`margin-left: auto; padding-right: 25px; display: flex; align-items: center; gap: 71px; color: #fff;`;
const Bookmarks = () => (
  <Marks>
    <Mark $tight><CsdnTile>C</CsdnTile>CSDN</Mark>
    <Mark $tight><Leet />leetcode</Mark>
    <Mark $tight><GoogleG />Google</Mark>
    <Mark><Nk />牛客</Mark>
    <Mark $tight><Yt />YouTube</Mark>
    {['开发手册', '计算机相关', '工具箱', '较少使用', '科研', '缓冲区', 'bpf', 'gpt', '新建文件夹'].map(t => <Mark key={t}><Fold />{t}</Mark>)}
    <Mark><TV c="#00aeec" />灵神-基础算法</Mark>
    <Mark><RT />RT-Thread 简介</Mark>
    <MarkEnd><ChevronRight size={32} strokeWidth={1.4} /><RailSearch /></MarkEnd>
  </Marks>
);

/* ---------- page ---------- */
const Workspace = styled.div`flex: 1; display: flex; min-height: 0; background: #55565b; padding: 0 0 6px 7px;`;
const Page = styled.div`width: 2476px; background: #fff; border-radius: 16px; overflow: hidden; display: flex; flex: none;`;
const Site = styled.div`width: 2450px; display: flex; flex-direction: column; flex: none;`;
const Head = styled.header`height: 91px; border-bottom: 1px solid #eaecef; padding-left: 38px; display: flex; align-items: center; flex: none; background: #fff;`;
const Brand = styled.div`font-size: 32px; font-weight: 600; white-space: nowrap; width: 386px; flex: none;`;
const SearchBox = styled.div`width: 317px; height: 52px; border: 1.5px solid #d8dbe0; border-radius: 26px; display: flex; align-items: center; padding-left: 12px; flex: none; margin-right: 26px;`;
const Nav = styled.nav`display: flex; align-items: center; gap: 28px; font-size: 22.400px; white-space: nowrap;`;
const NavItem = styled.span`display: flex; align-items: center; flex: none; font-weight: ${p => p.$latin ? 600 : 400}; letter-spacing: ${p => p.$latin ? '-.3px' : '0'};`;
const Caret = styled.i`width: 0; height: 0; border-left: 6px solid transparent; border-right: 6px solid transparent; border-top: 9px solid #cbcbcb; margin-left: 17px;`;
const Hundred = styled.span`color: #e8305a; font: italic 700 15px/15px ${sans}; border-bottom: 3px double #e8305a; margin: 0 3px 0 4px; letter-spacing: -1.500px; width: 23px;`;
const EmSvg = styled.svg`margin: 0 ${p => p.$r || 3}px 0 ${p => p.$l || 4}px; flex: none;`;
const Earth = () => (
  <EmSvg width="24" height="24" viewBox="0 0 24 24">
    <circle cx="12" cy="12" r="12" fill="#1c6fc4" />
    <path fill="#3f9b4a" d="M8 1c3 1 5 3 5 5l-3 2 3 3 6-1 2 5-3 6c-3-1-4-3-4-5l-5-2-6-4 2-6z" />
  </EmSvg>
);
const Memo = () => (
  <EmSvg $l={8} $r={4} width="20" height="28" viewBox="0 0 20 28"><path fill="#ece6f2" stroke="#c8bcd6" d="M1 1h13l5 5v21H1z" /><path stroke="#8a8296" d="M4 9h11M4 13h11M4 17h6" /><path stroke="#f08a2c" strokeWidth="4" d="M7 24 17 12" /><circle cx="18" cy="11" r="2" fill="#e8305a" /></EmSvg>
);

const navs = [['导读'], ['编程路书'], ['算法', 1], ['Java', 1, 1], ['Spring', 1, 1], ['面向对象', 1], ['Netty 4.x', 1, 1], ['字节码编程', 1], ['部署']];

const Header = () => (
  <Head>
    <Brand>小傅哥 bugstack 虫洞栈</Brand>
    <SearchBox><Search size={32} color="#aaa" strokeWidth={3.4} /></SearchBox>
    <Nav>
      {navs.map(([t, c, l]) => <NavItem key={t} $latin={l}>{t}{c && <Caret />}</NavItem>)}
      <NavItem><Hundred>100</Hundred>实战项目<Caret /></NavItem>
      <NavItem><Earth />知识星球</NavItem>
      <NavItem><Memo />产品<Caret /></NavItem>
      <NavItem>关于<Caret /></NavItem>
      <NavItem>B站<Outbound ml={11} /></NavItem>
    </Nav>
  </Head>
);

const Body = styled.div`flex: 1; display: flex; min-height: 0;`;
const Aside = styled.aside`width: 454px; border-right: 1px solid #eaecef; display: flex; flex: none; overflow: hidden; background: #fff;`;
const AsideScroll = styled.div`flex: 1; padding: 52px 24px 0 38px; overflow: hidden;`;
const SecTitle = styled.h3`margin: 0 0 11px; font-size: 25.600px; line-height: 36px; font-weight: 700; & ~ & { margin-top: 33px; }`;
const SideItem = styled.div`
  position: relative; padding: 8px 0 8px 19px; font-size: 22.400px; line-height: 33px;
  color: ${p => p.$on ? green : ink}; font-weight: ${p => p.$on ? 700 : 400};
  ${p => p.$on && `&:before { content: ""; position: absolute; left: -38px; top: 0; bottom: 1px; width: 6px; background: ${green}; }`}
`;
const ScrollCol = styled.div`width: ${p => p.$w}px; flex: none; padding-left: ${p => p.$pl}px; background: #fff; display: flex; flex-direction: column; align-items: flex-start;`;
const ArrowUp = styled.i`width: 0; height: 0; border-left: 8px solid transparent; border-right: 8px solid transparent; border-bottom: 11px solid #8f8f8f; margin-top: ${p => p.$mt}px;`;
const ArrowDown = styled.i`width: 0; height: 0; border-left: 8px solid transparent; border-right: 8px solid transparent; border-top: 11px solid #8f8f8f; margin-top: auto; margin-bottom: ${p => p.$mb}px;`;
const Thumb = styled.i`width: 16px; height: ${p => p.$h}px; border-radius: 8px; background: #8f8f8f; margin-top: ${p => p.$mt}px; display: block;`;

const side = [
  ['介绍', ['课程:OpenAi 大模型应用服务体系构建', '引言:开篇介绍', '*面试:技能、简历、问题汇总', '复盘:OpenAi 项目复盘总结']],
  ['Dev-Ops', ['第1节:push工程到仓库', '第2节:Docker环境配置', '第3节:Portainer环境配置', '第4节:Nginx环境配置', '第5节:服务镜像构建和容器部署', '第6节:前后端构建镜像部署', '第7节:网站添加百度统计', '第8节:应用监控', '第9节:部署上线']],
  ['ChatGPT-API', ['第1节:API工程搭建和简单访问认证', '第2节:Shiro登录授权发放访问token', '第3节:微信公众号验签和初步对接OpenAI', '第4节:工程重构和流式异步响应接口实现']],
];
const Sidebar = () => (
  <Aside>
    <AsideScroll>
      {side.map(([t, items]) => (
        <React.Fragment key={t}>
          <SecTitle>{t}</SecTitle>
          {items.map(i => <SideItem key={i} $on={i[0] === '*'}><Mixed text={i.replace('*', '')} ls={-.6} /></SideItem>)}
        </React.Fragment>
      ))}
    </AsideScroll>
    <ScrollCol $w={27} $pl={6}>
      <ArrowUp $mt={15} />
      <Thumb $h={449} $mt={15} />
      <ArrowDown $mb={16} />
    </ScrollCol>
  </Aside>
);

const Main = styled.main`flex: 1; background: #f4f5f7; display: flex; padding: 19px 15px 0 19px; gap: 16px; position: relative; overflow: hidden; min-width: 0;`;
const Article = styled.article`width: 1482px; flex: none; background: #fff; padding: 0 64px 0 62px; font-size: 24px; line-height: 40.800px; margin-right: 1px;`;
const H1 = styled.h1`margin: 0; padding: 56px 0 24px; font-size: 44.800px; line-height: 56px; font-weight: 700; border-bottom: 1px solid #eaecef;`;
const Thin = styled.span`font-weight: 600; letter-spacing: -.6px;`;
const Meta = styled.p`margin: 51px 0 0;`;
const Lnk = styled.a`color: ${green}; font-weight: 600; letter-spacing: -.5px;`;
const Quote = styled.blockquote`margin: 24px 0 0; height: 91px; background: #f3f4f6; border-left: 12px solid #42b983; padding-left: 25px; display: flex; align-items: center; color: #2c3e50;`;
const Para = styled.p`margin: 26px 0 0;`;
const H2 = styled.h2`position: relative; margin: 59px 0 0; font-size: 38.400px; line-height: 52px; font-weight: 700;`;
const Hash = styled.span`position: absolute; left: -28px; top: 2px; color: ${green}; font-size: 30px; font-weight: 400;`;
const List = styled.ul`margin: 31px 0 0; padding-left: 29px;`;

const skills = [
  '【前端】熟练使用 Next.js 构建的 React、Typescript 语言,构建的前端工程。',
  '【前端】熟练使用 React Route 路由子页面的开发技术,以及相应的信息传递。',
  '【前端】熟练掌握,跨域接口的对接使用,以及本地 json 数据加载。',
  '【前端】熟练使用本地浏览器内存,存储 Token、配置、对话等信息。',
  '【前端】熟练掌握前端页面数据的存放、使用以及和后端接口的交互方式。',
  '【后端】熟练构建 DDD 工程架构,分层模块,职责体系。并掌握 DDD 架构的开发模式以及微服务设计思想。',
  '【后端】熟练掌握 Spring、SpringBoot、MyBatis 等开发框架技术,并对其使用源码所提供的接口、类、SPI标准开发各类组件,有一定的设计思路和落地能力。—— 因为这里包含了 SDK 的设计、开发和使用。',
  '【后端】熟练使用多种设计模式、设计原则,对各类场景的方案设计和落地能力,深度提高自身编码思维和开发技术能力。—— 同时包括非常重要的会话模型OpenAi-SDK的架构设计。',
  '【后端】熟练对接微信公众号 SDK,属性验签流程和对话流程。以及完成 JWT Token 的生成和校验。',
  '【后端】熟练掌握 Nginx Auth 验证模块的开发和使用,以用于对接口的校验和拦截。',
  '【后端】熟练使用流式异步响应式框架开发应答接口,完成前端动态展示应答数据。',
];

const Toc = styled.div`width: 378px; height: 1074px; background: #fff; flex: none; padding: 0 25px;`;
const TocTitle = styled.div`height: 64px; line-height: 80px; font-size: 18.900px; font-weight: 700; text-align: center; border-bottom: 2px solid #eceef0;`;
const TocTop = styled.ul`margin: 10px 0 0; padding: 0 0 0 23px; font-size: 18.900px; line-height: 32.500px; list-style: disc;`;
const TocSub = styled.ul`margin: 5px 0 0; padding: 0 0 0 23px; list-style: circle;`;
const TocSubItem = styled.li`margin-bottom: 12px; line-height: 19.200px;`;
const TocLink = styled.span`display: inline-block; white-space: pre; color: #566878; vertical-align: baseline;`;
const TocRule = styled.div`border-bottom: 2px solid #eceef0; margin-top: 14px;`;

const qs = [
  '1. 你的这个项目的背景和需求来\n自哪里?',
  '2. 项目为什么使用DDD架构,有\n什么好处?',
  '3. 充血模型和贫血模型分别合适\n什么场景?',
  '4. 项目开发中你是怎么提交代码\n的?',
  '5. 这个项目有部署上线吗?怎么\n部署的,部署后内存占用如何,\n请描述下。',
  '6. 你的项目对接了哪些 OpenAI?\n怎么对接的?',
  '7. 因为你的项目是前后端分离\n的,接口跨域怎么做的?',
  '8. 请描述下商品下单支付场景。\n以及怎么保证的补偿。',
  '9. 你的订单表也是一个频繁使用\n的表,那么库表有哪些核心字\n段,索引有哪些?',
  '10. 我看到OpenAI的体验,都是渐\n进式展示的,这块后端使用了什\n么接口形式?',
  '11. 你的项目中对接了 ChatGPT 和\nChatGLM 两个模型,那么使用了\n什么设计模式?',
  '12. 你在项目中有支付购买的次\n数,那么对应就会有额度扣减、\n账户的校验、还有模型的使用类\n型,这些是怎么实现的?',
  '13. 你是怎么处理异常的?',
  '14. 对于返回给前端的接口,返回\n从出参结果怎么定义的?',
  '15. 公众号里可以对接 OpenAI 自\n动回复吗?',
];

const SideBtns = styled.div`width: 69px; flex: none; display: flex; flex-direction: column;`;
const SideBtn = styled.div`
  height: ${p => p.$h || 95.500}px; background: #fff; border-bottom: ${p => p.$flat ? 0 : '1px solid #eceef0'}; display: flex; flex-direction: column; align-items: center; padding-top: ${p => p.$pt || 14}px; flex: none;
  margin-top: ${p => p.$mt || 0}px;
`;
const BtnIcon = styled.span`height: 38px; display: flex; align-items: center; justify-content: center; flex: none;`;
const BtnLabel = styled.span`font-size: 17.600px; line-height: 24px; color: #888; margin-top: ${p => p.$mt ?? 9}px; white-space: nowrap;`;
const FloatTrans = styled.div`
  position: absolute; right: 0; top: 838px; width: 55px; height: 57px; border-radius: 29px 0 0 29px; background: linear-gradient(#f6bcd8, #f2aecb);
  box-shadow: 0 8px 20px rgba(0,0,0,.08); padding: 9px 0 0 16px;
`;

const MainArea = () => (
  <Main>
    <Article>
      <H1><Thin>《ChatGPT </Thin>{fw('微服务应用体系构建》,关于面试中的技能、简历、问题汇总')}</H1>
      <Meta>
        {fw('作者:小傅哥')}<br />
        {fw('博客:')}<Lnk>https://bugstack.cn</Lnk><Outbound /><br />
        {fw('课程:')}<Lnk>https://t.zsxq.com/0d7K7hJ0i</Lnk><Outbound />
      </Meta>
      <Quote><span>{fw('沉淀、分享、成长,让自己和他人都能有所收获!')}<Smile /></span></Quote>
      <Para><Mixed text="此部分主要用于向读者提供星球项目之一的 ChatGPT 微服务项目如何体现到简历中,包括;专业技能、项目经验。" /></Para>
      <H2><Hash>#</Hash>一、专业技能</H2>
      <List>{skills.map(s => <li key={s}><Mixed text={s} /></li>)}</List>
    </Article>
    <Toc>
      <TocTitle>{fw('面试:技能、简历、问题汇总')}</TocTitle>
      <TocTop>
        <li>一、专业技能</li>
        <li>二、简历模板</li>
        <li>三、面试问题
          <TocSub>{qs.map(q => <TocSubItem key={q}><TocLink><Mixed text={q} ls={-.5} /></TocLink></TocSubItem>)}</TocSub>
        </li>
      </TocTop>
      <TocRule />
    </Toc>
    <SideBtns>
      <SideBtn><BtnIcon><Tablet /></BtnIcon><BtnLabel>手机看</BtnLabel></SideBtn>
      <SideBtn><BtnIcon><LeftBar /></BtnIcon><BtnLabel>左栏</BtnLabel></SideBtn>
      <SideBtn><BtnIcon><Planet /></BtnIcon><BtnLabel>星球</BtnLabel></SideBtn>
      <SideBtn><BtnIcon><WeChat w={38} a="#09c109" b="#09c109" /></BtnIcon><BtnLabel>读者群</BtnLabel></SideBtn>
      <SideBtn><BtnIcon><BaiduCloud /></BtnIcon><BtnLabel>下资料</BtnLabel></SideBtn>
      <SideBtn><BtnIcon><Interview /></BtnIcon><BtnLabel>八股文</BtnLabel></SideBtn>
      <SideBtn><BtnIcon><Thick left /></BtnIcon><BtnLabel>上一篇</BtnLabel></SideBtn>
      <SideBtn $flat><BtnIcon><Thick /></BtnIcon><BtnLabel>下一篇</BtnLabel></SideBtn>
      <SideBtn $mt={291} $h={78.500} $flat $pt={2}><BtnIcon><SiteMap /></BtnIcon><BtnLabel $mt={11}>站点图</BtnLabel></SideBtn>
    </SideBtns>
    <FloatTrans><TransTile $bare $s={32} $f={17}><span>中</span><span>A</span></TransTile></FloatTrans>
  </Main>
);

const Rail = styled.div`flex: 1; display: flex; flex-direction: column; align-items: center; padding-top: 14px; color: #fff;`;
const RailItem = styled.span`height: ${p => p.$h || 71}px; display: flex; align-items: center; justify-content: center; flex: none;`;
const RailRule = styled.i`width: 49px; height: 1px; background: #85868a; flex: none; margin-top: ${p => p.$mt}px; display: block;`;

const RightRail = () => (
  <Rail>
    <RailItem><RailRings /></RailItem>
    <RailItem><Bird s={30} /></RailItem>
    <RailItem><NotionTile><SiNotion size={26} /></NotionTile></RailItem>
    <RailItem><OpenTile><SiOpenai size={22} color="#fff" /></OpenTile></RailItem>
    <RailItem><Ghost /></RailItem>
    <RailRule $mt={19} />
    <RailItem $h={110}><Plus size={30} strokeWidth={1.6} /></RailItem>
    <RailRule $mt={752} />
    <RailItem $h={80}><Settings size={32} strokeWidth={1.6} /></RailItem>
  </Rail>
);

/* ---------- taskbar ---------- */
const Task = styled.footer`height: 83px; background: #1b1b1b; display: flex; align-items: center; padding-left: 667px; color: #f2f2f2; font-size: 20.500px; flex: none; white-space: nowrap;`;
const TaskIcon = styled.span`margin-left: ${p => p.$ml || 0}px; display: flex; align-items: center; flex: none; position: relative;`;
const TaskApp = styled.div`
  margin-left: ${p => p.$ml || 0}px; width: ${p => p.$w}px; height: 70px; border-radius: 8px; display: flex; align-items: center; gap: ${p => p.$gap || 13}px; flex: none; position: relative; overflow: hidden;
  padding-left: ${p => p.$pl || 0}px; background: ${p => p.$on ? '#2b2b2b' : 'transparent'}; border: 1px solid ${p => p.$on ? '#363636' : 'transparent'};
`;
const Pill = styled.i`position: absolute; left: ${p => p.$l}px; bottom: 2px; width: ${p => p.$w}px; height: 5px; border-radius: 3px; background: ${p => p.$c};`;
const Tray = styled.div`margin-left: auto; display: flex; align-items: center; padding-right: 34px;`;
const TrayItem = styled.span`width: ${p => p.$w}px; display: flex; justify-content: center; align-items: center; flex: none; font-size: 28px; color: #fff;`;
const Clock = styled.div`width: 104px; text-align: right; line-height: 28px; font-size: 20.500px; color: #fff;`;
const NavArrow = () => (
  <Ic width="28" height="28" viewBox="0 0 28 28" fill="none" stroke="#c8d8ea" strokeWidth="2"><path d="M26 2 2 15l12 1 4 10z" /></Ic>
);

const Taskbar = () => (
  <Task>
    <TaskIcon><WinLogo /></TaskIcon>
    <TaskIcon $ml={37}><TaskView /></TaskIcon>
    <TaskIcon $ml={34}><Explorer /></TaskIcon>
    <TaskApp $ml={21} $w={307} $pl={12} $on><Edge /><span>{fw('面试:技能、简历、问题')}</span><Pill $l={21} $w={28} $c="#b4c4e4" /></TaskApp>
    <TaskApp $ml={18} $w={295} $pl={2}><VSCode /><span>main.py - test-helper - V</span><Pill $l={20} $w={9} $c="#8a8a8a" /></TaskApp>
    <TaskApp $ml={15} $w={262} $pl={9} $gap={17}><Clash /><span>Clash for Windows</span></TaskApp>
    <TaskApp $w={110} $pl={10} $gap={15} $ml={6}><WeChat w={40} a="#19c25a" b="#d8d8d8" /><span>微信</span></TaskApp>
    <Tray>
      <TrayItem $w={43}><ChevronUp size={30} strokeWidth={2} /></TrayItem>
      <TrayItem $w={69}><WeChat w={30} a="#19c25a" b="#d8d8d8" /></TrayItem>
      <TrayItem $w={39}><NavArrow /></TrayItem>
      <TrayItem $w={75}>中</TrayItem>
      <TrayItem $w={39}><Wifi size={30} strokeWidth={2} /></TrayItem>
      <TrayItem $w={43}><VolumeX size={30} strokeWidth={1.6} /></TrayItem>
      <TrayItem $w={43}><BatteryCharging size={32} strokeWidth={1.6} /></TrayItem>
      <Clock>17:05<br />2025/3/3</Clock>
    </Tray>
  </Task>
);

const Shell = styled.div`width: 2560px; height: 1600px; display: flex; flex-direction: column; overflow: hidden;`;

export default function App() {
  return (
    <Shell>
      <Global />
      <TabStrip />
      <Toolbar />
      <Bookmarks />
      <Workspace>
        <Page>
          <Site>
            <Header />
            <Body>
              <Sidebar />
              <MainArea />
            </Body>
          </Site>
          <ScrollCol $w={26} $pl={6}>
            <ArrowUp $mt={14} />
            <Thumb $h={137} $mt={15} />
            <ArrowDown $mb={14} />
          </ScrollCol>
        </Page>
        <RightRail />
      </Workspace>
      <Taskbar />
    </Shell>
  );
}
